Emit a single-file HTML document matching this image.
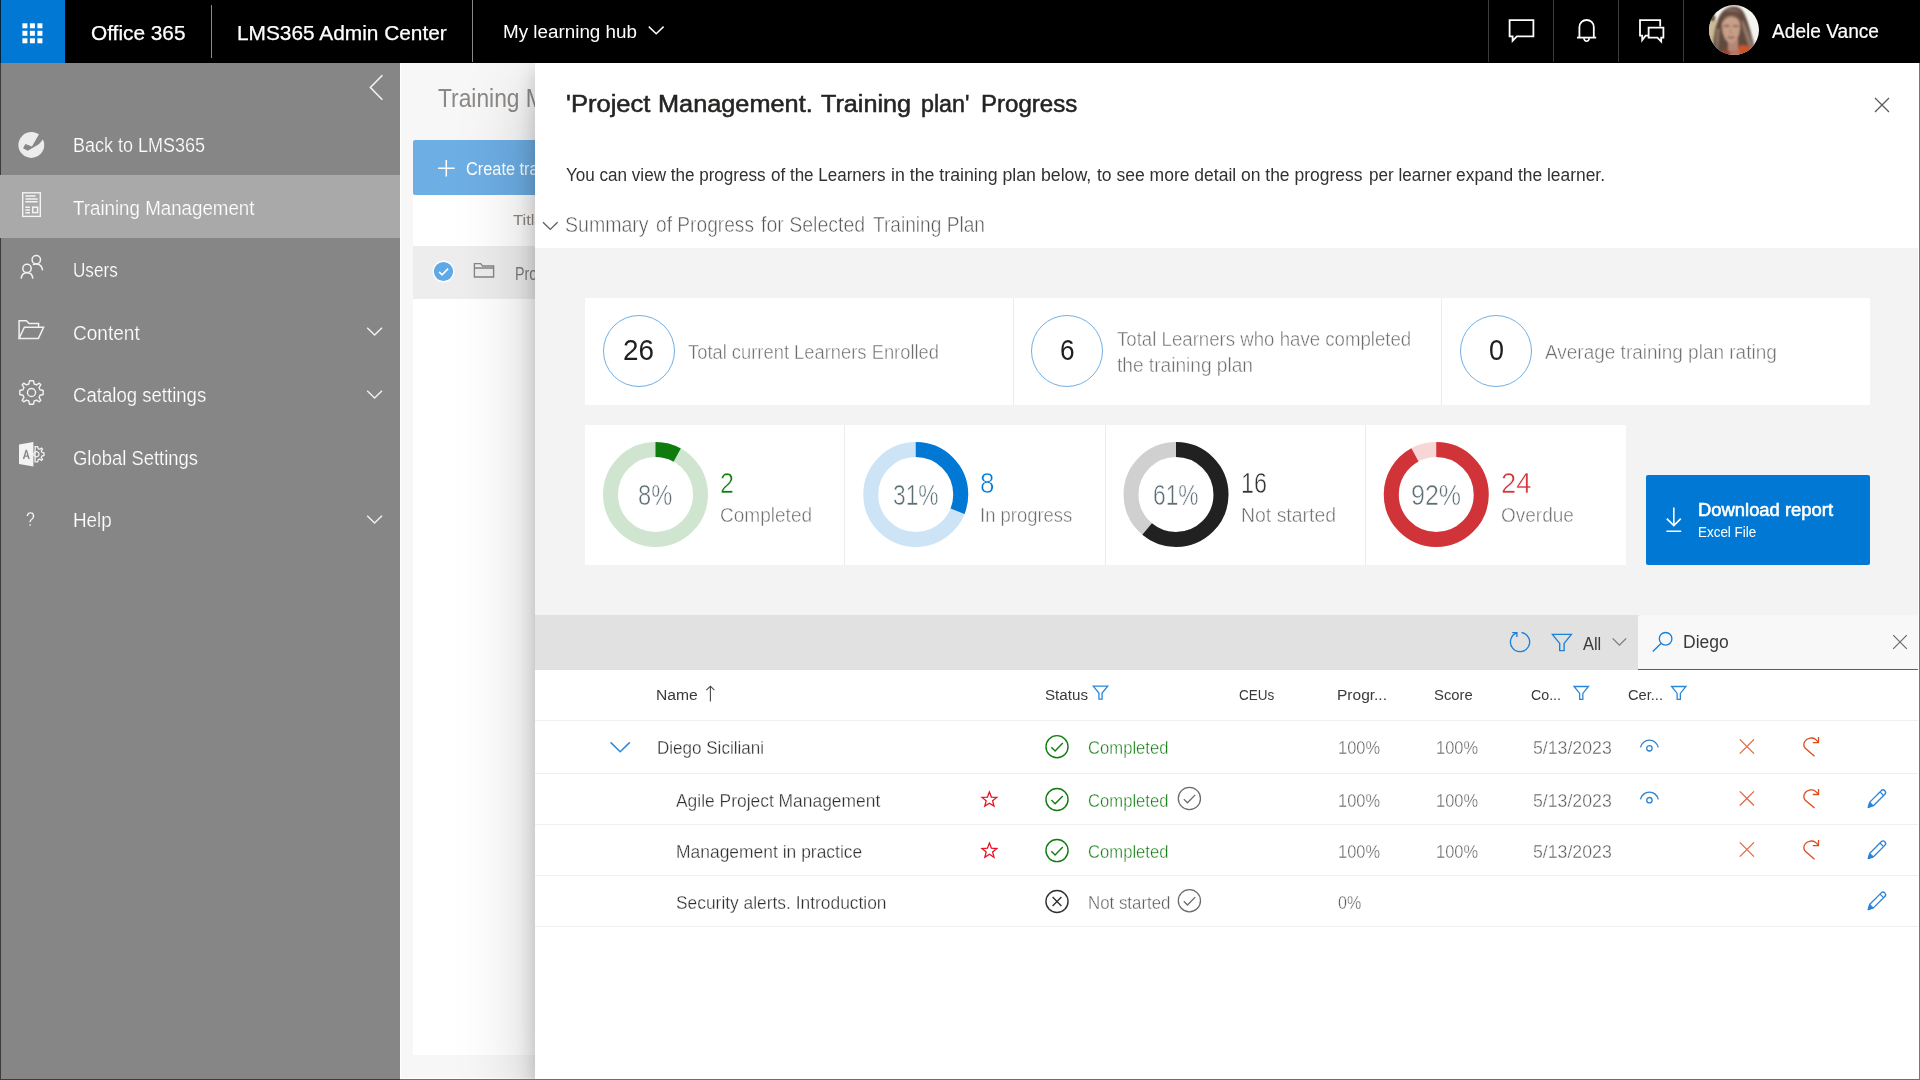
<!DOCTYPE html>
<html lang="en">
<head>
<meta charset="utf-8">
<title>LMS365 Admin Center - Training plan progress</title>
<style>
html,body{margin:0;padding:0;width:1920px;height:1080px;overflow:hidden;background:#f7f7f7;font-family:"Liberation Sans",sans-serif;}
.a{position:absolute;display:block;}
.t{position:absolute;white-space:pre;line-height:1;transform-origin:0 50%;display:block;}
#topbar{left:0;top:0;width:1920px;height:63px;background:#000;}
#waffle{left:0;top:0;width:65px;height:62.5px;background:#0078d4;}
.sep{width:1px;top:0;height:62px;background:#3d3d3d;}
.sepl{width:1px;top:5px;height:53px;background:#8a8a8a;}
#sidebar{left:0;top:63px;width:400px;height:1017px;background:#868686;}
#navsel{left:0;top:175px;width:400px;height:63px;background:#a9a9a9;}
#ledge{left:0;top:63px;width:1px;height:112px;background:#3c3c3c;}
#ledge2{left:0;top:238px;width:1px;height:842px;background:#3c3c3c;}
#main{left:400px;top:63px;width:135px;height:1017px;background:#f7f7f7;}
#card{left:413px;top:140px;width:122px;height:915px;background:#fff;}
#bluebtn{left:413px;top:140px;width:122px;height:54.5px;background:#6daee4;border-top-left-radius:2px;border-bottom-left-radius:2px;}
#selrow{left:413px;top:246px;width:122px;height:53px;background:#ededed;}
#panel{left:535px;top:63px;width:1385px;height:1017px;background:#fff;box-shadow:0 32px 72px rgba(0,0,0,.22),0 6px 18px rgba(0,0,0,.18);}
#graysec{left:535px;top:248px;width:1383px;height:367px;background:#f3f3f3;}
.wcard{background:#fff;}
.vdiv{width:1px;background:#ececec;}
#dl{left:1646px;top:475px;width:224px;height:89.5px;background:#0078d4;border-radius:2px;}
#toolbar{left:535px;top:615px;width:1383px;height:55px;background:#e1e1e1;}
#search{left:1638px;top:615px;width:280px;height:54px;background:#f8f8f8;border-bottom:1px solid #605e5c;border-top-left-radius:3px;}
.hl{left:535px;width:1383px;height:1px;background:#f0efee;}
.ring{border:1px solid #71afe5;border-radius:50%;width:70px;height:70px;}
#bottomline{left:400px;top:1079px;width:1520px;height:1px;background:#6e6e6e;}
#bottomline2{left:0;top:1079px;width:400px;height:1px;background:#3c3c3c;}
#mainedge{left:400px;top:63px;width:1px;height:1016px;background:#fff;}
#mainedge2{left:400px;top:1078px;width:135px;height:1px;background:#fff;}
#rightline{left:1919px;top:63px;width:1px;height:1017px;background:#777;}
</style>
</head>
<body>

<!-- ================= TOP BAR ================= -->
<div id="topbar" class="a"></div>
<div id="waffle" class="a"></div><div class="a" style="left:0;top:0;width:1px;height:63px;background:#002443"></div>
<svg class="a" style="left:22px;top:23px" width="22" height="21" viewBox="0 0 22 21">
  <g fill="#fff">
    <rect x="0.4" y="0.3" width="5" height="5"/><rect x="7.9" y="0.3" width="5" height="5"/><rect x="15.4" y="0.3" width="5" height="5"/>
    <rect x="0.4" y="7.8" width="5" height="5"/><rect x="7.9" y="7.8" width="5" height="5"/><rect x="15.4" y="7.8" width="5" height="5"/>
    <rect x="0.4" y="15.3" width="5" height="5"/><rect x="7.9" y="15.3" width="5" height="5"/><rect x="15.4" y="15.3" width="5" height="5"/>
  </g>
</svg>
<div class="a sepl" style="left:211px"></div>
<div class="a sepl" style="left:472px;top:0;height:62px"></div>
<!-- chevron after My learning hub -->
<svg class="a" style="left:647px;top:24px" width="18" height="12" viewBox="0 0 18 12"><path d="M1.8 2.6 L9.2 9.8 L16.6 2.6" fill="none" stroke="#fff" stroke-width="1.5"/></svg>
<div class="a sep" style="left:1488px"></div>
<div class="a sep" style="left:1553px"></div>
<div class="a sep" style="left:1618px"></div>
<div class="a sep" style="left:1683px"></div>
<!-- comment icon -->
<svg class="a" style="left:1507px;top:17px" width="30" height="28" viewBox="0 0 30 28">
  <path d="M2.6 3.1 H26.4 V19.4 H9.8 L5.6 23.8 V19.4 H2.6 Z" fill="none" stroke="#fff" stroke-width="1.8" stroke-linejoin="miter"/>
</svg>
<!-- bell icon -->
<svg class="a" style="left:1574px;top:17px" width="26" height="28" viewBox="0 0 26 28">
  <path d="M5.4 20.4 V10.4 C5.4 5.8 8.8 3.0 12.6 3.0 C16.4 3.0 19.8 5.8 19.8 10.4 V20.4" fill="none" stroke="#fff" stroke-width="1.8"/>
  <path d="M3.0 20.6 H22.2" fill="none" stroke="#fff" stroke-width="1.8"/>
  <path d="M9.8 21.2 C10.2 23.4 11.4 24.2 12.6 24.2 C13.8 24.2 15 23.4 15.4 21.2" fill="none" stroke="#fff" stroke-width="1.6"/>
</svg>
<!-- chat icon -->
<svg class="a" style="left:1637px;top:17px" width="30" height="28" viewBox="0 0 30 28">
  <path d="M11 18.6 H8.6 L5.2 23.0 V18.6 H3.0 V3.1 H23.2 V9.6" fill="none" stroke="#fff" stroke-width="1.8" stroke-linejoin="miter"/>
  <path d="M11.6 10.6 H26.4 V20.6 H24.2 V24.6 L20.4 20.6 H11.6 Z" fill="none" stroke="#fff" stroke-width="1.8" stroke-linejoin="miter"/>
</svg>
<!-- avatar -->
<svg class="a" style="left:1709px;top:5px" width="50" height="50" viewBox="0 0 50 50">
  <defs>
    <clipPath id="av"><circle cx="25" cy="25" r="25"/></clipPath>
    <filter id="bl" x="-10%" y="-10%" width="120%" height="120%"><feGaussianBlur stdDeviation="0.9"/></filter>
  </defs>
  <g clip-path="url(#av)">
    <rect width="50" height="50" fill="#f7f5f2"/>
    <g filter="url(#bl)">
      <rect x="-2" y="11" width="9" height="26" fill="#cdbd98"/>
      <rect x="-2" y="10" width="8" height="6" fill="#5e4d3e"/>
      <!-- hair -->
      <path d="M4 52 C3 40 5 24 9 14 C12 6 18 1 25 1.4 C31 1.6 34 5 36 10 C39 17 41 24 43 32 C45 38 46 44 44 52 Z" fill="#634b3f"/>
      <path d="M33 14 C37 20 39 28 42 34 C44 39 45 44 43 48 C40 44 38 36 36 30 C34 24 32 18 33 14 Z" fill="#93796a"/>
      <path d="M7 24 C6 32 6 40 8 48 C10 42 10 32 11 24 Z" fill="#8d7262"/>
      <path d="M15 6 C20 3 28 3 32 8 C28 6 20 6 15 6 Z" fill="#8a6f5f"/>
      <!-- neck -->
      <path d="M19 34 H29 V46 H19 Z" fill="#b98b76"/>
      <!-- face -->
      <path d="M13 22 C12.5 14 17 10 22.5 10 C28 10 31.5 14 31 23 C30.6 31 27 38 22 38 C17.5 38 13.6 31 13 22 Z" fill="#c9a18a"/>
      <path d="M13.2 19 C13.6 12.6 18 9.2 23 9.4 C28 9.6 31.4 12.6 31.2 18 C29 13.6 26 11.6 22 11.8 C18 12 15 14.6 13.2 19 Z" fill="#7a5d4e"/>
      <path d="M14.6 21.4 C16.6 20.4 19 20.6 20.4 21.6 M24 21.6 C25.6 20.6 28 20.6 29.6 21.6" stroke="#7a5a4c" stroke-width="1.6" fill="none"/>
      <path d="M19 32 C21 33 23.4 33 25.4 32" stroke="#8c5650" stroke-width="1.5" fill="none"/>
      <path d="M21.6 24 C21.4 26.6 21 28 22.6 28.6" stroke="#b58670" stroke-width="1.2" fill="none"/>
      <!-- clothing -->
      <path d="M30 41 C34 39.6 39 40.4 43 43 C42 47 38 50 32 52 L28 52 Z" fill="#d2572b"/>
      <path d="M11 46 C14 44.6 18 45 21 46.6 L23 52 H12 Z" fill="#a9432f"/>
      <path d="M21 45 C24 46 27 46 30 44 L31 52 H21 Z" fill="#c27a60"/>
    </g>
  </g>
</svg>

<!-- ================= SIDEBAR ================= -->
<div id="sidebar" class="a"></div>
<div id="ledge" class="a"></div><div id="ledge2" class="a"></div>
<div id="navsel" class="a"></div>
<!-- collapse chevron -->
<svg class="a" style="left:366px;top:72px" width="20" height="31" viewBox="0 0 20 31"><path d="M16.4 3.2 L4.4 15.5 L16.4 27.8" fill="none" stroke="#f3f3f3" stroke-width="1.6"/></svg>
<!-- back icon -->
<svg class="a" style="left:16px;top:129px" width="32" height="32" viewBox="0 0 32 32">
  <circle cx="15.3" cy="16" r="12.9" fill="#ececec"/>
  <path d="M9.37 15.04 L15.98 17.57 L25 1.8 L30 5.6 C27.4 10 25 13.6 22.79 15.23 L11.7 21.85 L7.04 19.32 Z" fill="#868686"/>
</svg>
<!-- training mgmt icon -->
<svg class="a" style="left:20px;top:190px" width="24" height="30" viewBox="0 0 24 30">
  <rect x="2.7" y="2.8" width="17.6" height="23.6" fill="none" stroke="#f4f4f4" stroke-width="1.4"/>
  <path d="M5.4 6 H15.6 M5.4 8.9 H17.6 M5.4 11.8 H17.6" stroke="#f4f4f4" stroke-width="1.5"/>
  <path d="M5.4 17.2 H10 M5.4 20 H10 M5.4 22.8 H10" stroke="#f4f4f4" stroke-width="1.4"/>
  <rect x="12.7" y="17.2" width="4.9" height="5.4" fill="none" stroke="#f4f4f4" stroke-width="1.5"/>
</svg>
<!-- users icon -->
<svg class="a" style="left:18px;top:252px" width="28" height="30" viewBox="0 0 28 30">
  <circle cx="18.3" cy="7.8" r="4.2" fill="none" stroke="#f1f1f1" stroke-width="1.5"/>
  <circle cx="9" cy="16.4" r="4.2" fill="none" stroke="#f1f1f1" stroke-width="1.5"/>
  <path d="M3.2 26.6 C3.6 21.8 6.8 20.8 9.2 20.8 C11.6 20.8 14.4 21.8 14.8 26.6" fill="none" stroke="#f1f1f1" stroke-width="1.5"/>
  <path d="M14.8 12.6 C17 11.8 19.6 11.8 21.6 12.8 C23.6 14 24.4 16 24.6 18.4" fill="none" stroke="#f1f1f1" stroke-width="1.5"/>
</svg>
<!-- content folder icon -->
<svg class="a" style="left:16px;top:317px" width="31" height="25" viewBox="0 0 31 25">
  <path d="M3.1 21.4 V3.8 H10.4 L13 6.6 H22.6 V10.2" fill="none" stroke="#f1f1f1" stroke-width="1.5" stroke-linejoin="miter"/>
  <path d="M3.1 21.4 L8.4 10.2 H27.6 L22.4 21.4 Z" fill="none" stroke="#f1f1f1" stroke-width="1.5" stroke-linejoin="miter"/>
</svg>
<!-- gear icon -->
<svg class="a" style="left:17px;top:378px" width="29" height="29" viewBox="-15.4 -15.4 30.8 30.8">
  <path d="M-2.1 -12.4 H2.1 L2.9 -9 L5.3 -8 L8.3 -9.9 L9.9 -8.3 L8 -5.3 L9 -2.9 L12.4 -2.1 V2.1 L9 2.9 L8 5.3 L9.9 8.3 L8.3 9.9 L5.3 8 L2.9 9 L2.1 12.4 H-2.1 L-2.9 9 L-5.3 8 L-8.3 9.9 L-9.9 8.3 L-8 5.3 L-9 2.9 L-12.4 2.1 V-2.1 L-9 -2.9 L-8 -5.3 L-9.9 -8.3 L-8.3 -9.9 L-5.3 -8 L-2.9 -9 Z" fill="none" stroke="#f1f1f1" stroke-width="1.5" stroke-linejoin="round"/>
  <circle r="4.3" fill="none" stroke="#f1f1f1" stroke-width="1.5"/>
</svg>
<!-- global settings icon -->
<svg class="a" style="left:17px;top:440px" width="30" height="29" viewBox="0 0 30 29">
  <g transform="translate(19.4 14.2)">
    <path d="M-1.3 -7.6 H1.3 L1.8 -5.5 L3.3 -4.9 L5.1 -6.1 L6.1 -5.1 L4.9 -3.3 L5.5 -1.8 L7.6 -1.3 V1.3 L5.5 1.8 L4.9 3.3 L6.1 5.1 L5.1 6.1 L3.3 4.9 L1.8 5.5 L1.3 7.6 H-1.3 Z" fill="none" stroke="#f1f1f1" stroke-width="1.3"/>
    <circle r="2.6" fill="none" stroke="#f1f1f1" stroke-width="1.3"/>
  </g>
  <path d="M2 4.6 L16.4 2 V26.6 L2 24 Z" fill="#f3f3f3"/>
  <path d="M5.8 19 L8.6 9.8 H10 L12.8 19 H11.2 L10.6 16.8 H8 L7.4 19 Z M8.4 15.4 H10.2 L9.3 11.8 Z" fill="#868686"/>
</svg>
<!-- nav chevrons -->
<svg class="a" style="left:365px;top:325px" width="20" height="13" viewBox="0 0 20 13"><path d="M2.2 2.8 L9.6 10 L17 2.8" fill="none" stroke="#f1f1f1" stroke-width="1.5"/></svg>
<svg class="a" style="left:365px;top:387.5px" width="20" height="13" viewBox="0 0 20 13"><path d="M2.2 2.8 L9.6 10 L17 2.8" fill="none" stroke="#f1f1f1" stroke-width="1.5"/></svg>
<svg class="a" style="left:365px;top:512.5px" width="20" height="13" viewBox="0 0 20 13"><path d="M2.2 2.8 L9.6 10 L17 2.8" fill="none" stroke="#f1f1f1" stroke-width="1.5"/></svg>

<!-- ================= BACKGROUND CONTENT ================= -->
<div id="main" class="a"></div>
<div id="mainedge" class="a"></div><div id="mainedge2" class="a"></div>
<div id="card" class="a"></div>
<div id="bluebtn" class="a"></div>
<svg class="a" style="left:437px;top:159px" width="19" height="19" viewBox="0 0 19 19"><path d="M9.3 1 V17.6 M1 9.3 H17.6" stroke="#fff" stroke-width="1.5"/></svg>
<div id="selrow" class="a"></div>
<svg class="a" style="left:431px;top:259px" width="25" height="25" viewBox="-12.5 -12.5 25 25">
  <circle r="10.9" fill="#fff"/><circle r="9.6" fill="#5ea9e6"/>
  <path d="M-4.4 0.4 L-1.4 3.4 L4.6 -2.8" fill="none" stroke="#fff" stroke-width="1.7"/>
</svg>
<svg class="a" style="left:472px;top:261px" width="24" height="18" viewBox="0 0 24 18">
  <path d="M2.4 16 V2.6 H8.6 L10.6 5 H21.6 V16 Z M2.4 7 H21.6" fill="none" stroke="#878482" stroke-width="1.35" stroke-linejoin="miter"/>
</svg>

<span class="t" style="left:438.00px;top:86.00px;font-size:25px;color:#8b8886;transform:scaleX(0.9116);">Training Management</span>
<span class="t" style="left:465.50px;top:161.00px;font-size:17.5px;color:#fff;transform:scaleX(0.9328);">Create training</span>
<span class="t" style="left:513.00px;top:212.00px;font-size:15px;color:#8f8782;transform:scaleX(1.1018);">Title</span>
<span class="t" style="left:514.50px;top:266.00px;font-size:17.5px;color:#7f7d7c;transform:scaleX(0.8143);">Project</span>

<!-- ================= PANEL ================= -->
<div id="panel" class="a"></div>
<div id="graysec" class="a"></div>
<!-- close X -->
<svg class="a" style="left:1872px;top:95px" width="20" height="20" viewBox="0 0 20 20"><path d="M3 3 L17 17 M17 3 L3 17" stroke="#5c5a58" stroke-width="1.3" fill="none"/></svg>
<!-- summary chevron -->
<svg class="a" style="left:541px;top:219px" width="19" height="13" viewBox="0 0 19 13"><path d="M2 3.2 L9.3 10.4 L16.6 3.2" fill="none" stroke="#605e5c" stroke-width="1.3"/></svg>

<!-- stat row 1 -->
<div class="a wcard" style="left:585px;top:298px;width:1285px;height:106.5px"></div>
<div class="a vdiv" style="left:1013px;top:298px;height:106.5px"></div>
<div class="a vdiv" style="left:1441px;top:298px;height:106.5px"></div>
<div class="a ring" style="left:603px;top:315px"></div>
<div class="a ring" style="left:1031px;top:315px"></div>
<div class="a ring" style="left:1460px;top:315px"></div>

<!-- stat row 2 -->
<div class="a wcard" style="left:585px;top:424.5px;width:1041px;height:140px"></div>
<div class="a vdiv" style="left:844px;top:424.5px;height:140px"></div>
<div class="a vdiv" style="left:1105px;top:424.5px;height:140px"></div>
<div class="a vdiv" style="left:1365px;top:424.5px;height:140px"></div>
<svg class="a" style="left:601px;top:440px" width="109" height="109" viewBox="0 0 109 109"><g transform="translate(54.50 54.50)"><circle r="45" fill="none" stroke="#cfe5cf" stroke-width="15"/><circle r="45" fill="none" stroke="#107c10" stroke-width="15" stroke-dasharray="22.62 282.74" transform="rotate(-90)"/></g></svg>
<svg class="a" style="left:861px;top:440px" width="109" height="109" viewBox="0 0 109 109"><g transform="translate(54.75 54.50)"><circle r="45" fill="none" stroke="#cce4f6" stroke-width="15"/><circle r="45" fill="none" stroke="#0078d4" stroke-width="15" stroke-dasharray="87.65 282.74" transform="rotate(-90)"/></g></svg>
<svg class="a" style="left:1122px;top:440px" width="109" height="109" viewBox="0 0 109 109"><g transform="translate(54.00 54.50)"><circle r="45" fill="none" stroke="#d0d0d0" stroke-width="15"/><circle r="45" fill="none" stroke="#212121" stroke-width="15" stroke-dasharray="172.47 282.74" transform="rotate(-90)"/></g></svg>
<svg class="a" style="left:1382px;top:440px" width="109" height="109" viewBox="0 0 109 109"><g transform="translate(54.25 54.50)"><circle r="45" fill="none" stroke="#f6d6d7" stroke-width="15"/><circle r="45" fill="none" stroke="#d13438" stroke-width="15" stroke-dasharray="260.12 282.74" transform="rotate(-90)"/></g></svg>
<div id="dl" class="a"></div>
<svg class="a" style="left:1663px;top:505px" width="22" height="30" viewBox="0 0 22 30">
  <path d="M10.8 2.6 V20.4 M3.8 13.6 L10.8 20.6 L17.8 13.6 M3.4 26.2 H18.2" fill="none" stroke="#fff" stroke-width="1.6"/>
</svg>

<!-- toolbar -->
<div id="toolbar" class="a"></div>
<div id="search" class="a"></div>
<!-- refresh -->
<svg class="a" style="left:1507px;top:629px" width="26" height="26" viewBox="-13 -13 26 26">
  <path d="M-3.1 -9.1 A9.6 9.6 0 1 0 1.6 -9.5" fill="none" stroke="#1a7fd6" stroke-width="1.3"/>
  <path d="M-7.8 -9.4 H-3.1 V-5" fill="none" stroke="#1a7fd6" stroke-width="1.3"/>
</svg>
<!-- filter -->
<svg class="a" style="left:1551px;top:632.5px" width="22" height="19" viewBox="0 0 22 19">
  <path d="M1.4 1.3 H20.4 L13.1 10.4 V17.6 H8.7 V10.4 Z" fill="none" stroke="#1a7fd6" stroke-width="1.35" stroke-linejoin="miter"/>
</svg>
<svg class="a" style="left:1611px;top:636px" width="17" height="12" viewBox="0 0 17 12"><path d="M1.6 2.4 L8.4 9.2 L15.2 2.4" fill="none" stroke="#7a7876" stroke-width="1.2"/></svg>
<!-- search icon -->
<svg class="a" style="left:1651px;top:630px" width="24" height="24" viewBox="0 0 24 24">
  <circle cx="14.6" cy="8.8" r="6.3" fill="none" stroke="#1a7fd6" stroke-width="1.35"/>
  <path d="M10 13.4 L1.8 21.6" stroke="#1a7fd6" stroke-width="1.4"/>
</svg>
<svg class="a" style="left:1890px;top:632px" width="20" height="20" viewBox="0 0 20 20"><path d="M3.2 3.2 L16.8 16.8 M16.8 3.2 L3.2 16.8" stroke="#6b6967" stroke-width="1.2" fill="none"/></svg>

<!-- table lines -->
<div class="a hl" style="top:720px"></div>
<div class="a hl" style="top:773px"></div>
<div class="a hl" style="top:824px"></div>
<div class="a hl" style="top:875px"></div>
<div class="a hl" style="top:926px"></div>
<!-- sort arrow -->
<svg class="a" style="left:704px;top:684px" width="13" height="19" viewBox="0 0 13 19"><path d="M6.4 2.2 V17.4 M2.4 6.2 L6.4 2.2 L10.4 6.2" fill="none" stroke="#4a4847" stroke-width="1.1"/></svg>
<!-- row chevron -->
<svg class="a" style="left:608px;top:739px" width="24" height="16" viewBox="0 0 24 16"><path d="M2.6 3.4 L12.2 12.8 L21.8 3.4" fill="none" stroke="#2b88d8" stroke-width="1.5"/></svg>
<svg class="a" style="left:1091px;top:684px" width="19" height="18" viewBox="0 0 19 18"><g transform="translate(9.50 8.75)"><path d="M-7.2 -6.55 H7.2 L1.6 0.35 V6.35 H-1.6 V0.35 Z" fill="none" stroke="#2b88d8" stroke-width="1.3" stroke-linejoin="miter"/></g></svg>
<svg class="a" style="left:1572px;top:684px" width="19" height="18" viewBox="0 0 19 18"><g transform="translate(9.25 9.05)"><path d="M-7.2 -6.55 H7.2 L1.6 0.35 V6.35 H-1.6 V0.35 Z" fill="none" stroke="#2b88d8" stroke-width="1.3" stroke-linejoin="miter"/></g></svg>
<svg class="a" style="left:1669px;top:684px" width="19" height="18" viewBox="0 0 19 18"><g transform="translate(9.75 9.05)"><path d="M-7.2 -6.55 H7.2 L1.6 0.35 V6.35 H-1.6 V0.35 Z" fill="none" stroke="#2b88d8" stroke-width="1.3" stroke-linejoin="miter"/></g></svg>
<svg class="a" style="left:1044px;top:733px" width="27" height="27" viewBox="0 0 27 27"><g transform="translate(13.00 13.70)"><circle r="11.05" fill="none" stroke="#107c10" stroke-width="1.4"/><path d="M-5.6 0.6 L-1.9 4.3 L5.8 -3.6" fill="none" stroke="#107c10" stroke-width="1.4"/></g></svg>
<svg class="a" style="left:1637px;top:737px" width="24" height="20" viewBox="0 0 24 20"><g transform="translate(12.40 10.00)"><path d="M-8.9 0.4 A9.1 9.1 0 0 1 8.9 0.4" fill="none" stroke="#2b84d4" stroke-width="1.3"/><circle cx="0" cy="1.3" r="2.7" fill="none" stroke="#2b84d4" stroke-width="1.3"/></g></svg>
<svg class="a" style="left:1737px;top:737px" width="20" height="20" viewBox="0 0 20 20"><g transform="translate(9.90 9.50)"><path d="M-7.1 -7.1 L7.1 7.1 M7.1 -7.1 L-7.1 7.1" fill="none" stroke="#e2623a" stroke-width="1.2"/></g></svg>
<svg class="a" style="left:1800px;top:734px" width="22" height="25" viewBox="0 0 22 25"><g transform="translate(11.40 12.60)"><path d="M3.1 9.6 L-6.1 1.7 C-8.2 -0.3 -7.9 -3.9 -6 -6 C-3.6 -8.8 1 -9.5 4 -7.3 C5.4 -6.3 6.4 -5.2 7.1 -4" fill="none" stroke="#dc4a1e" stroke-width="1.3"/><path d="M7.1 -9.6 V-4 H1.4" fill="none" stroke="#dc4a1e" stroke-width="1.3"/></g></svg>
<svg class="a" style="left:1044px;top:786px" width="27" height="27" viewBox="0 0 27 27"><g transform="translate(13.00 13.50)"><circle r="11.05" fill="none" stroke="#107c10" stroke-width="1.4"/><path d="M-5.6 0.6 L-1.9 4.3 L5.8 -3.6" fill="none" stroke="#107c10" stroke-width="1.4"/></g></svg>
<svg class="a" style="left:1176px;top:785px" width="27" height="27" viewBox="0 0 27 27"><g transform="translate(13.40 13.50)"><circle r="11.1" fill="none" stroke="#6e6c6a" stroke-width="1.3"/><path d="M-5.6 0.6 L-1.9 4.3 L5.8 -3.6" fill="none" stroke="#6e6c6a" stroke-width="1.3"/></g></svg>
<svg class="a" style="left:979px;top:789px" width="21" height="21" viewBox="0 0 21 21"><g transform="translate(10.40 10.20)"><polygon points="0.00,-7.20 2.00,-2.15 7.42,-1.81 3.23,1.65 4.58,6.91 0.00,4.00 -4.58,6.91 -3.23,1.65 -7.42,-1.81 -2.00,-2.15" fill="none" stroke="#e81123" stroke-width="1.3" stroke-linejoin="miter"/></g></svg>
<svg class="a" style="left:1637px;top:789px" width="24" height="20" viewBox="0 0 24 20"><g transform="translate(12.40 9.90)"><path d="M-8.9 0.4 A9.1 9.1 0 0 1 8.9 0.4" fill="none" stroke="#2b84d4" stroke-width="1.3"/><circle cx="0" cy="1.3" r="2.7" fill="none" stroke="#2b84d4" stroke-width="1.3"/></g></svg>
<svg class="a" style="left:1737px;top:788px" width="20" height="20" viewBox="0 0 20 20"><g transform="translate(9.90 10.40)"><path d="M-7.1 -7.1 L7.1 7.1 M7.1 -7.1 L-7.1 7.1" fill="none" stroke="#e2623a" stroke-width="1.2"/></g></svg>
<svg class="a" style="left:1800px;top:786px" width="22" height="25" viewBox="0 0 22 25"><g transform="translate(11.40 12.50)"><path d="M3.1 9.6 L-6.1 1.7 C-8.2 -0.3 -7.9 -3.9 -6 -6 C-3.6 -8.8 1 -9.5 4 -7.3 C5.4 -6.3 6.4 -5.2 7.1 -4" fill="none" stroke="#dc4a1e" stroke-width="1.3"/><path d="M7.1 -9.6 V-4 H1.4" fill="none" stroke="#dc4a1e" stroke-width="1.3"/></g></svg>
<svg class="a" style="left:1865px;top:787px" width="24" height="24" viewBox="0 0 24 24"><g transform="translate(12.00 11.70)"><path d="M-8.8 8.8 L-7.2 3.4 L4.2 -8 C5.2 -9 6.8 -9 7.8 -8 C8.8 -7 8.8 -5.4 7.8 -4.4 L-3.6 7 Z" fill="none" stroke="#2b84d4" stroke-width="1.3" stroke-linejoin="round"/><path d="M-8.8 8.8 L-7.2 3.4 L-3.6 7 Z" fill="#2b84d4" stroke="#2b84d4" stroke-width="0.8" stroke-linejoin="round"/><path d="M3.0 -6.8 L6.6 -3.2" fill="none" stroke="#2b84d4" stroke-width="1.2"/></g></svg>
<svg class="a" style="left:1044px;top:837px" width="27" height="27" viewBox="0 0 27 27"><g transform="translate(13.00 13.60)"><circle r="11.05" fill="none" stroke="#107c10" stroke-width="1.4"/><path d="M-5.6 0.6 L-1.9 4.3 L5.8 -3.6" fill="none" stroke="#107c10" stroke-width="1.4"/></g></svg>
<svg class="a" style="left:979px;top:840px" width="21" height="21" viewBox="0 0 21 21"><g transform="translate(10.40 10.30)"><polygon points="0.00,-7.20 2.00,-2.15 7.42,-1.81 3.23,1.65 4.58,6.91 0.00,4.00 -4.58,6.91 -3.23,1.65 -7.42,-1.81 -2.00,-2.15" fill="none" stroke="#e81123" stroke-width="1.3" stroke-linejoin="miter"/></g></svg>
<svg class="a" style="left:1737px;top:840px" width="20" height="20" viewBox="0 0 20 20"><g transform="translate(9.90 9.50)"><path d="M-7.1 -7.1 L7.1 7.1 M7.1 -7.1 L-7.1 7.1" fill="none" stroke="#e2623a" stroke-width="1.2"/></g></svg>
<svg class="a" style="left:1800px;top:837px" width="22" height="25" viewBox="0 0 22 25"><g transform="translate(11.40 12.60)"><path d="M3.1 9.6 L-6.1 1.7 C-8.2 -0.3 -7.9 -3.9 -6 -6 C-3.6 -8.8 1 -9.5 4 -7.3 C5.4 -6.3 6.4 -5.2 7.1 -4" fill="none" stroke="#dc4a1e" stroke-width="1.3"/><path d="M7.1 -9.6 V-4 H1.4" fill="none" stroke="#dc4a1e" stroke-width="1.3"/></g></svg>
<svg class="a" style="left:1865px;top:838px" width="24" height="24" viewBox="0 0 24 24"><g transform="translate(12.00 11.80)"><path d="M-8.8 8.8 L-7.2 3.4 L4.2 -8 C5.2 -9 6.8 -9 7.8 -8 C8.8 -7 8.8 -5.4 7.8 -4.4 L-3.6 7 Z" fill="none" stroke="#2b84d4" stroke-width="1.3" stroke-linejoin="round"/><path d="M-8.8 8.8 L-7.2 3.4 L-3.6 7 Z" fill="#2b84d4" stroke="#2b84d4" stroke-width="0.8" stroke-linejoin="round"/><path d="M3.0 -6.8 L6.6 -3.2" fill="none" stroke="#2b84d4" stroke-width="1.2"/></g></svg>
<svg class="a" style="left:1044px;top:888px" width="27" height="27" viewBox="0 0 27 27"><g transform="translate(13.00 13.50)"><circle r="11.05" fill="none" stroke="#323130" stroke-width="1.4"/><path d="M-4.4 -4.4 L4.4 4.4 M4.4 -4.4 L-4.4 4.4" fill="none" stroke="#323130" stroke-width="1.4"/></g></svg>
<svg class="a" style="left:1176px;top:887px" width="27" height="27" viewBox="0 0 27 27"><g transform="translate(13.40 13.70)"><circle r="11.1" fill="none" stroke="#6e6c6a" stroke-width="1.3"/><path d="M-5.6 0.6 L-1.9 4.3 L5.8 -3.6" fill="none" stroke="#6e6c6a" stroke-width="1.3"/></g></svg>
<svg class="a" style="left:1865px;top:889px" width="24" height="24" viewBox="0 0 24 24"><g transform="translate(12.00 11.90)"><path d="M-8.8 8.8 L-7.2 3.4 L4.2 -8 C5.2 -9 6.8 -9 7.8 -8 C8.8 -7 8.8 -5.4 7.8 -4.4 L-3.6 7 Z" fill="none" stroke="#2b84d4" stroke-width="1.3" stroke-linejoin="round"/><path d="M-8.8 8.8 L-7.2 3.4 L-3.6 7 Z" fill="#2b84d4" stroke="#2b84d4" stroke-width="0.8" stroke-linejoin="round"/><path d="M3.0 -6.8 L6.6 -3.2" fill="none" stroke="#2b84d4" stroke-width="1.2"/></g></svg>

<!-- ================= TEXT ================= -->
<span class="t" style="left:90.50px;top:24.00px;font-size:19.6px;color:#fff;transform:scaleX(1.0622);-webkit-text-stroke:0.25px #fff;">Office 365</span>
<span class="t" style="left:237.00px;top:24.00px;font-size:19.6px;color:#fff;transform:scaleX(1.0640);-webkit-text-stroke:0.25px #fff;">LMS365 Admin Center</span>
<span class="t" style="left:503.40px;top:23.00px;font-size:18px;color:#fff;transform:scaleX(1.0462);">My learning hub</span>
<span class="t" style="left:1772.40px;top:21.00px;font-size:20px;color:#fff;transform:scaleX(0.9559);-webkit-text-stroke:0.2px #fff;">Adele Vance</span>
<span class="t" style="left:72.60px;top:135.00px;font-size:20px;color:#ffffff;transform:scaleX(0.8995);-webkit-text-stroke:0.22px #868686;">Back to LMS365</span>
<span class="t" style="left:72.60px;top:198.00px;font-size:20px;color:#ffffff;transform:scaleX(0.9360);-webkit-text-stroke:0.22px #a9a9a9;">Training Management</span>
<span class="t" style="left:72.60px;top:260.00px;font-size:20px;color:#ffffff;transform:scaleX(0.8558);-webkit-text-stroke:0.22px #868686;">Users</span>
<span class="t" style="left:72.60px;top:323.00px;font-size:20px;color:#ffffff;transform:scaleX(0.9527);-webkit-text-stroke:0.22px #868686;">Content</span>
<span class="t" style="left:72.60px;top:385.00px;font-size:20px;color:#ffffff;transform:scaleX(0.9291);-webkit-text-stroke:0.22px #868686;">Catalog settings</span>
<span class="t" style="left:72.60px;top:448.00px;font-size:20px;color:#ffffff;transform:scaleX(0.9216);-webkit-text-stroke:0.22px #868686;">Global Settings</span>
<span class="t" style="left:72.60px;top:510.00px;font-size:20px;color:#ffffff;transform:scaleX(0.9419);-webkit-text-stroke:0.22px #868686;">Help</span>
<span class="t" style="left:26.20px;top:509.00px;font-size:20px;color:#ffffff;transform:scaleX(0.7910);-webkit-text-stroke:0.3px #868686;">?</span>
<span class="t" style="left:565.60px;top:92.00px;font-size:24.6px;color:#252423;transform:scaleX(1.0388);-webkit-text-stroke:0.55px #252423;">&#x27;Project</span>
<span class="t" style="left:658.40px;top:92.00px;font-size:24.6px;color:#252423;transform:scaleX(1.0287);-webkit-text-stroke:0.55px #252423;">Management.</span>
<span class="t" style="left:820.90px;top:92.00px;font-size:24.6px;color:#252423;transform:scaleX(1.0244);-webkit-text-stroke:0.55px #252423;">Training</span>
<span class="t" style="left:920.80px;top:92.00px;font-size:24.6px;color:#252423;transform:scaleX(0.9453);-webkit-text-stroke:0.55px #252423;">plan&#x27;</span>
<span class="t" style="left:981.20px;top:92.00px;font-size:24.6px;color:#252423;transform:scaleX(0.9774);-webkit-text-stroke:0.55px #252423;">Progress</span>
<span class="t" style="left:565.70px;top:167.00px;font-size:17.5px;color:#323130;transform:scaleX(0.9754);">You can view the progress</span>
<span class="t" style="left:771.00px;top:167.00px;font-size:17.5px;color:#323130;transform:scaleX(0.9718);">of the Learners</span>
<span class="t" style="left:891.30px;top:167.00px;font-size:17.5px;color:#323130;transform:scaleX(1.0137);">in the training plan below,</span>
<span class="t" style="left:1096.90px;top:167.00px;font-size:17.5px;color:#323130;transform:scaleX(1.0007);">to see more detail</span>
<span class="t" style="left:1241.20px;top:167.00px;font-size:17.5px;color:#323130;transform:scaleX(0.9983);">on the progress</span>
<span class="t" style="left:1369.20px;top:167.00px;font-size:17.5px;color:#323130;transform:scaleX(0.9759);">per learner</span>
<span class="t" style="left:1456.30px;top:167.00px;font-size:17.5px;color:#323130;transform:scaleX(0.9944);">expand the learner.</span>
<span class="t" style="left:565.40px;top:215.00px;font-size:21.25px;color:#5a5856;transform:scaleX(0.9195);-webkit-text-stroke:0.5px #fff;">Summary</span>
<span class="t" style="left:656.40px;top:215.00px;font-size:21.25px;color:#5a5856;transform:scaleX(0.9018);-webkit-text-stroke:0.5px #fff;">of Progress</span>
<span class="t" style="left:761.10px;top:215.00px;font-size:21.25px;color:#5a5856;transform:scaleX(0.9188);-webkit-text-stroke:0.5px #fff;">for Selected</span>
<span class="t" style="left:872.50px;top:215.00px;font-size:21.25px;color:#5a5856;transform:scaleX(0.8994);-webkit-text-stroke:0.5px #fff;">Training Plan</span>
<span class="t" style="left:623.00px;top:336.00px;font-size:28.75px;color:#201f1e;transform:scaleX(0.9692);">26</span>
<span class="t" style="left:1059.70px;top:336.00px;font-size:28.75px;color:#201f1e;transform:scaleX(0.9125);">6</span>
<span class="t" style="left:1488.50px;top:336.00px;font-size:28.75px;color:#201f1e;transform:scaleX(0.9375);">0</span>
<span class="t" style="left:688.00px;top:342.00px;font-size:20px;color:#6f6d6b;transform:scaleX(0.9178);-webkit-text-stroke:0.45px #fff;">Total current Learners Enrolled</span>
<span class="t" style="left:1116.50px;top:329.00px;font-size:20px;color:#6f6d6b;transform:scaleX(0.9319);-webkit-text-stroke:0.45px #fff;">Total Learners who have completed</span>
<span class="t" style="left:1116.50px;top:355.00px;font-size:20px;color:#6f6d6b;transform:scaleX(0.9555);-webkit-text-stroke:0.45px #fff;">the training plan</span>
<span class="t" style="left:1545.00px;top:342.00px;font-size:20px;color:#6f6d6b;transform:scaleX(0.9488);-webkit-text-stroke:0.45px #fff;">Average training plan rating</span>
<span class="t" style="left:638.48px;top:481.00px;font-size:28.75px;color:#5c6d73;transform:scaleX(0.8241);-webkit-text-stroke:0.55px #fff;">8%</span>
<span class="t" style="left:720.20px;top:469.00px;font-size:28.75px;color:#107c10;transform:scaleX(0.8750);-webkit-text-stroke:0.55px #fff;">2</span>
<span class="t" style="left:720.10px;top:505.00px;font-size:20px;color:#6f6d6b;transform:scaleX(0.9517);-webkit-text-stroke:0.45px #fff;">Completed</span>
<span class="t" style="left:893.10px;top:481.00px;font-size:28.75px;color:#5c6d73;transform:scaleX(0.7907);-webkit-text-stroke:0.55px #fff;">31%</span>
<span class="t" style="left:980.45px;top:469.00px;font-size:28.75px;color:#0078d4;transform:scaleX(0.9062);-webkit-text-stroke:0.55px #fff;">8</span>
<span class="t" style="left:980.35px;top:505.00px;font-size:20px;color:#6f6d6b;transform:scaleX(0.9224);-webkit-text-stroke:0.45px #fff;">In progress</span>
<span class="t" style="left:1153.35px;top:481.00px;font-size:28.75px;color:#5c6d73;transform:scaleX(0.7907);-webkit-text-stroke:0.55px #fff;">61%</span>
<span class="t" style="left:1240.70px;top:469.00px;font-size:28.75px;color:#323130;transform:scaleX(0.8129);-webkit-text-stroke:0.55px #fff;">16</span>
<span class="t" style="left:1240.60px;top:505.00px;font-size:20px;color:#6f6d6b;transform:scaleX(0.9716);-webkit-text-stroke:0.45px #fff;">Not started</span>
<span class="t" style="left:1411.35px;top:481.00px;font-size:28.75px;color:#5c6d73;transform:scaleX(0.8689);-webkit-text-stroke:0.55px #fff;">92%</span>
<span class="t" style="left:1500.95px;top:469.00px;font-size:28.75px;color:#d13438;transform:scaleX(0.9536);-webkit-text-stroke:0.55px #fff;">24</span>
<span class="t" style="left:1500.85px;top:505.00px;font-size:20px;color:#6f6d6b;transform:scaleX(0.9489);-webkit-text-stroke:0.45px #fff;">Overdue</span>
<span class="t" style="left:1697.50px;top:502.00px;font-size:17.5px;color:#fff;transform:scaleX(1.0514);-webkit-text-stroke:0.55px #fff;">Download report</span>
<span class="t" style="left:1697.50px;top:524.00px;font-size:15px;color:#fff;transform:scaleX(0.8957);">Excel File</span>
<span class="t" style="left:1582.50px;top:635.00px;font-size:18.5px;color:#3b3a39;transform:scaleX(0.8875);">All</span>
<span class="t" style="left:1683.00px;top:634.00px;font-size:17.5px;color:#3b3a39;transform:scaleX(1.0003);">Diego</span>
<span class="t" style="left:655.75px;top:687.00px;font-size:15.2px;color:#3b3a39;transform:scaleX(1.0305);">Name</span>
<span class="t" style="left:1044.50px;top:687.00px;font-size:15.2px;color:#3b3a39;transform:scaleX(0.9985);">Status</span>
<span class="t" style="left:1239.25px;top:687.00px;font-size:15.2px;color:#3b3a39;transform:scaleX(0.8885);">CEUs</span>
<span class="t" style="left:1337.00px;top:687.00px;font-size:15.2px;color:#3b3a39;transform:scaleX(1.0211);">Progr...</span>
<span class="t" style="left:1433.75px;top:687.00px;font-size:15.2px;color:#3b3a39;transform:scaleX(0.9764);">Score</span>
<span class="t" style="left:1531.25px;top:687.00px;font-size:15.2px;color:#3b3a39;transform:scaleX(0.9352);">Co...</span>
<span class="t" style="left:1628.25px;top:687.00px;font-size:15.2px;color:#3b3a39;transform:scaleX(0.9643);">Cer...</span>
<span class="t" style="left:657.00px;top:740.00px;font-size:17.5px;color:#2f2e2d;transform:scaleX(0.9734);-webkit-text-stroke:0.3px #fff;">Diego Siciliani</span>
<span class="t" style="left:675.75px;top:793.00px;font-size:17.5px;color:#2f2e2d;transform:scaleX(0.9951);-webkit-text-stroke:0.3px #fff;">Agile Project Management</span>
<span class="t" style="left:675.75px;top:844.00px;font-size:17.5px;color:#2f2e2d;transform:scaleX(0.9972);-webkit-text-stroke:0.3px #fff;">Management in practice</span>
<span class="t" style="left:675.75px;top:895.00px;font-size:17.5px;color:#2f2e2d;transform:scaleX(0.9927);-webkit-text-stroke:0.3px #fff;">Security alerts. Introduction</span>
<span class="t" style="left:1088.25px;top:740.00px;font-size:17.5px;color:#107c10;transform:scaleX(0.9511);-webkit-text-stroke:0.4px #fff;">Completed</span>
<span class="t" style="left:1338.00px;top:740.00px;font-size:17.5px;color:#5e5c5a;transform:scaleX(0.9382);-webkit-text-stroke:0.35px #fff;">100%</span>
<span class="t" style="left:1435.50px;top:740.00px;font-size:17.5px;color:#5e5c5a;transform:scaleX(0.9382);-webkit-text-stroke:0.35px #fff;">100%</span>
<span class="t" style="left:1532.50px;top:740.00px;font-size:17.5px;color:#5e5c5a;transform:scaleX(1.0114);-webkit-text-stroke:0.35px #fff;">5/13/2023</span>
<span class="t" style="left:1088.25px;top:793.00px;font-size:17.5px;color:#107c10;transform:scaleX(0.9511);-webkit-text-stroke:0.4px #fff;">Completed</span>
<span class="t" style="left:1338.00px;top:793.00px;font-size:17.5px;color:#5e5c5a;transform:scaleX(0.9382);-webkit-text-stroke:0.35px #fff;">100%</span>
<span class="t" style="left:1435.50px;top:793.00px;font-size:17.5px;color:#5e5c5a;transform:scaleX(0.9382);-webkit-text-stroke:0.35px #fff;">100%</span>
<span class="t" style="left:1532.50px;top:793.00px;font-size:17.5px;color:#5e5c5a;transform:scaleX(1.0114);-webkit-text-stroke:0.35px #fff;">5/13/2023</span>
<span class="t" style="left:1088.25px;top:844.00px;font-size:17.5px;color:#107c10;transform:scaleX(0.9511);-webkit-text-stroke:0.4px #fff;">Completed</span>
<span class="t" style="left:1338.00px;top:844.00px;font-size:17.5px;color:#5e5c5a;transform:scaleX(0.9382);-webkit-text-stroke:0.35px #fff;">100%</span>
<span class="t" style="left:1435.50px;top:844.00px;font-size:17.5px;color:#5e5c5a;transform:scaleX(0.9382);-webkit-text-stroke:0.35px #fff;">100%</span>
<span class="t" style="left:1532.50px;top:844.00px;font-size:17.5px;color:#5e5c5a;transform:scaleX(1.0114);-webkit-text-stroke:0.35px #fff;">5/13/2023</span>
<span class="t" style="left:1088.25px;top:895.00px;font-size:17.5px;color:#5e5c5a;transform:scaleX(0.9637);-webkit-text-stroke:0.35px #fff;">Not started</span>
<span class="t" style="left:1338.00px;top:895.00px;font-size:17.5px;color:#5e5c5a;transform:scaleX(0.9191);-webkit-text-stroke:0.35px #fff;">0%</span>

<div id="bottomline" class="a"></div><div id="bottomline2" class="a"></div>
<div id="rightline" class="a"></div>
</body>
</html>
